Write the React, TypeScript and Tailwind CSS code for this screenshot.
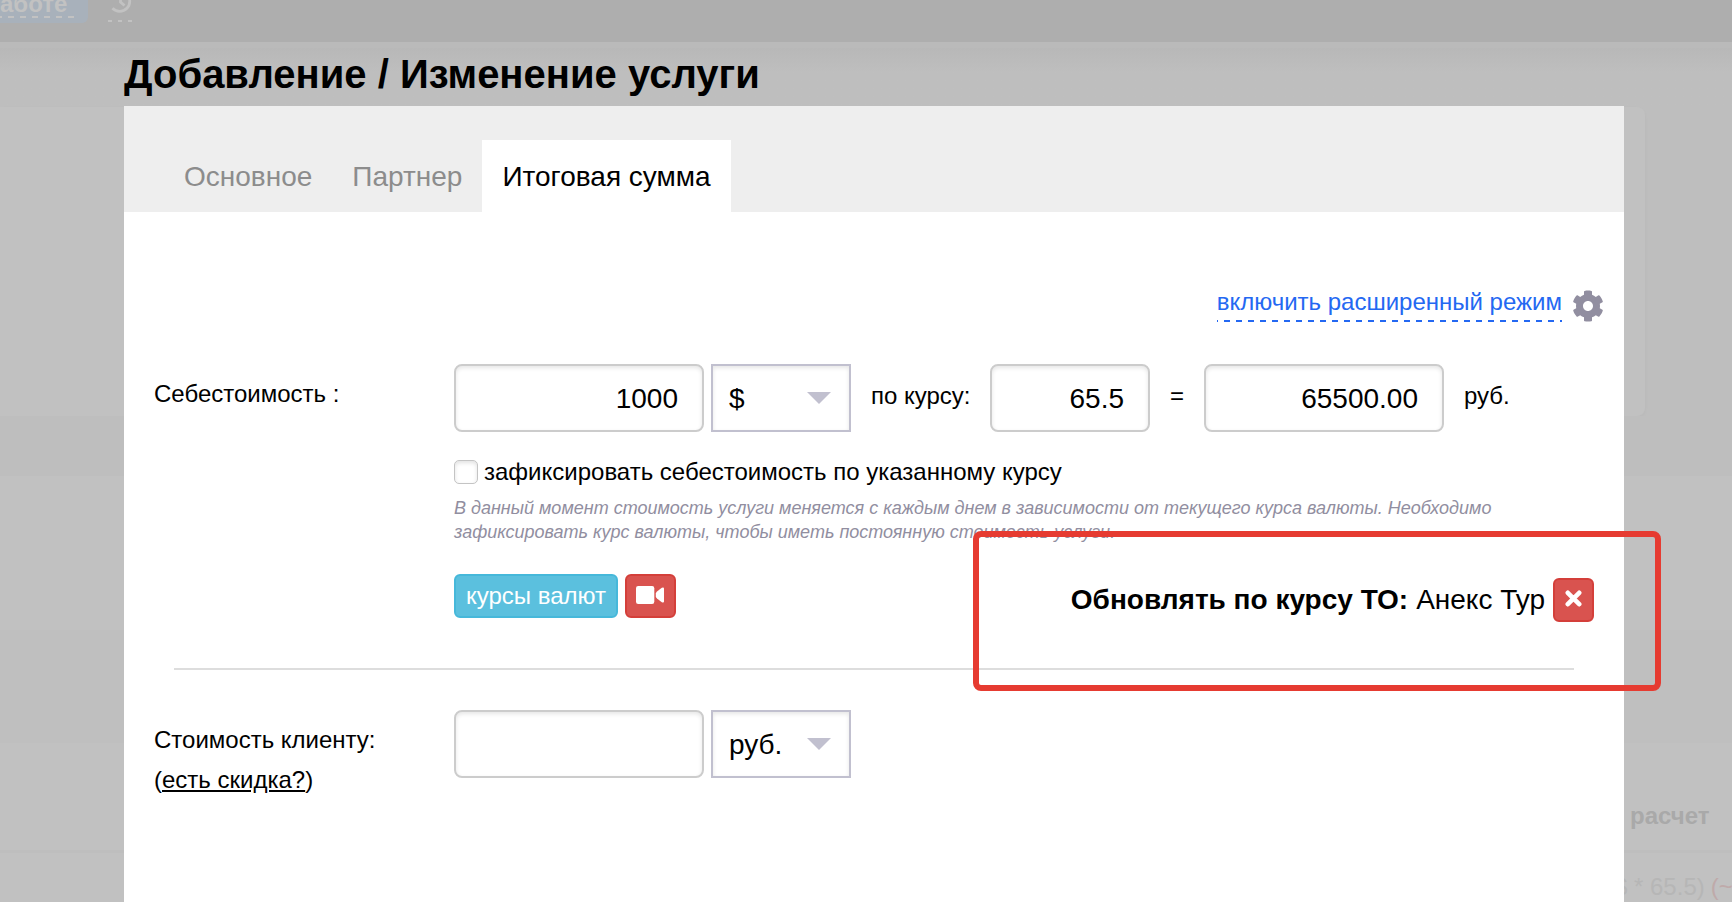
import clsx from "clsx"
import { FaCog } from "react-icons/fa"

const tabs = [
    { id: 1, text: "Основное", active: false },
    { id: 2, text: "Партнер", active: false },
    { id: 3, text: "Итоговая сумма", active: true },
]

function Field({ value, className }: { value: string; className: string }) {
    return (
        <input
            type="text"
            defaultValue={value}
            className={clsx("h-[68px] shrink-0 rounded-lg border-2 border-[#ccc] bg-white px-6 pt-0.5 text-right text-[28px] text-black shadow-[inset_0_2px_4px_rgba(0,0,0,0.1)] outline-none", className)}
        />
    )
}

function Select({ value }: { value: string }) {
    return (
        <button type="button" className="ml-[7px] flex h-[68px] w-[140px] shrink-0 items-center justify-between border-2 border-[#c1c0cf] bg-white pl-4 pr-[18px] text-[28px] shadow-[inset_0_2px_4px_rgba(0,0,0,0.1)]">
            <span className="pt-0.5">{value}</span>
            <svg className="h-3 w-6 fill-[#c1c0cf]" viewBox="0 0 24 12" aria-hidden="true">
                <path d="M0 0h24L12 12z" />
            </svg>
        </button>
    )
}

// dimmed page behind the dialog
function Backdrop() {
    return (
        <div className="flex h-full flex-col bg-[#c1c1c1]" aria-hidden="true">
            <div className="flex h-[42px] shrink-0 items-start bg-[#aeaeae]">
                <div className="flex h-[23px] w-[88px] items-end rounded-br-md bg-[#a8b1bb] pb-[5px]">
                    <span className="w-[75px] bg-[linear-gradient(90deg,#c2c2c2_6px,transparent_6px)] bg-[length:12px_2px] bg-[position:8px_100%] bg-repeat-x pb-[3px] text-[24px] font-bold leading-[22px] text-[#c2c2c2]">аботе</span>
                </div>
                <div className="ml-5 flex h-[22px] w-6 items-end justify-end bg-[linear-gradient(90deg,#c2c2c2_4px,transparent_4px)] bg-[length:10px_2px] bg-[position:0_100%] bg-repeat-x pb-[9px]">
                    <svg className="h-6 w-6 shrink-0" viewBox="0 0 24 24" fill="none" stroke="#c2c2c2" strokeWidth="2.8">
                        <path d="M4.5 19.3A10 10 0 1 0 4 6" />
                        <path d="M12.5 5.5V13l4 3.5" />
                    </svg>
                </div>
            </div>
            <div className="h-1.5 shrink-0 bg-[#bababa]" />
            <div className="h-[59px] shrink-0 bg-linear-to-b from-[#b8b8b8] to-[#bebebe] to-40%" />
            <div className="flex h-[309px] shrink-0 bg-[#bebebe]">
                <div className="w-[1645px] rounded-r-lg bg-[#c1c1c1] shadow-[0_2px_4px_rgba(0,0,0,0.03)]" />
            </div>
            <div className="h-[60px] shrink-0 bg-[#bebebe]" />
            <div className="h-[154px] shrink-0 bg-[#c1c1c1]" />
            <div className="h-[113px] shrink-0 bg-[#bfbfbf]" />
            <div className="flex h-[110px] shrink-0 items-end border-b-3 border-[#bebebe] pb-5 pl-[1630px]">
                <span className="text-[24px] font-bold leading-7 text-[#a9a9a9]">расчет</span>
            </div>
            <div className="flex h-[49px] shrink-0 items-center gap-1.5 whitespace-nowrap pl-[1614px] pt-[18px] text-[24px] text-[#b6b6b6]">
                <span>$ * 65.5)</span>
                <span className="text-[#bfaaaa]">(~</span>
            </div>
        </div>
    )
}

export default function App() {
    return (
        <div className="relative h-[902px] w-[1732px] overflow-hidden font-['Liberation_Sans',Arial,sans-serif] text-[24px] text-black">
            <Backdrop />
            <div className="absolute inset-0 pl-[124px]">
                <div className="flex h-full w-[1500px] flex-col">
                    <h1 className="h-[106px] shrink-0 pt-[51px] text-[40px] font-bold leading-[46px]">Добавление / Изменение услуги</h1>
                    <div className="flex h-[106px] shrink-0 items-end bg-[#eee] pl-10">
                        {
                            tabs.map(tab => (
                                <a key={tab.id} className={clsx("flex h-[72px] items-center px-5 pt-0.5 text-[28px]", tab.active ? "bg-white" : "text-[#8c8c8c]")}>
                                    {tab.text}
                                </a>
                            ))
                        }
                    </div>
                    <div className="flex-1 bg-white">
                        <div className="flex h-[152px] items-start justify-end pr-5 pt-[76px]">
                            <a className="mr-[10px] h-[34px] bg-[linear-gradient(90deg,#2468f2_6px,transparent_6px)] bg-[length:12px_2px] bg-[position:7px_100%] bg-repeat-x text-[24px] leading-7 text-[#2468f2]">включить расширенный режим</a>
                            <FaCog className="mt-0.5 h-8 w-8 text-[#918ea0]" />
                        </div>

                        <div className="flex pl-[30px]">
                            <div className="w-[300px] shrink-0 pt-4 leading-7">Себестоимость :</div>
                            <div className="w-[1170px]">
                                <div className="flex items-center whitespace-nowrap">
                                    <Field value="1000" className="w-[250px]" />
                                    <Select value="$" />
                                    <span className="w-[139px] shrink-0 pb-1 pl-5">по курсу:</span>
                                    <Field value="65.5" className="w-[160px]" />
                                    <span className="w-[54px] shrink-0 pb-1 pl-5">=</span>
                                    <Field value="65500.00" className="w-[240px]" />
                                    <span className="pb-1 pl-5">руб.</span>
                                </div>
                                <label className="mt-[26px] flex h-7 items-center gap-1.5">
                                    <span className="h-6 w-6 rounded-[5px] border border-[#c4c4c4] bg-white shadow-[inset_0_2px_4px_rgba(0,0,0,0.12)]" />
                                    зафиксировать себестоимость по указанному курсу
                                </label>
                                <p className="mt-[10px] w-[1060px] text-[18px] italic leading-6 text-[#918ea0]">
                                    В данный момент стоимость услуги меняется с каждым днем в зависимости от текущего курса валюты. Необходимо зафиксировать курс валюты, чтобы иметь постоянную стоимость услуги.
                                </p>
                                <div className="mt-[30px] flex items-start">
                                    <button type="button" className="h-11 w-[164px] rounded-md border-2 border-[#46b8da] bg-[#5bc0de] text-white">курсы валют</button>
                                    <button type="button" aria-label="видео" className="ml-[7px] flex h-11 w-[51px] items-center justify-center rounded-md border-2 border-[#d43f3a] bg-[#d9534f] pr-0.5">
                                        <svg className="mb-0.5 h-[18px] w-7 fill-white" viewBox="0 0 28 18" aria-hidden="true">
                                            <rect width="18.3" height="18" rx="2.2" />
                                            <path d="M19.8 7.4Q20 6.4 21 5.4L25.8 1.8Q28 .8 28 2.6v12.8q0 1.8-2.2.8L21 12.6q-1-1-1.2-2z" />
                                        </svg>
                                    </button>
                                    <div className="ml-auto mr-[30px] mt-1 flex items-center whitespace-nowrap text-[28px]">
                                        <b className="mr-2">Обновлять по курсу ТО:</b>
                                        Анекс Тур
                                        <button type="button" aria-label="удалить" className="ml-2 flex h-11 w-[41px] items-center justify-center rounded-md border-2 border-[#d43f3a] bg-[#d9534f]">
                                            <svg className="mb-[3px] h-[17px] w-[17px]" viewBox="0 0 17 17" stroke="#fff" strokeWidth="4.6" strokeLinecap="round" aria-hidden="true">
                                                <path d="m2.8 2.8 11.4 11.4M14.2 2.8 2.8 14.2" />
                                            </svg>
                                        </button>
                                    </div>
                                </div>
                            </div>
                        </div>

                        <hr className="mx-[50px] mt-[46px] border-t-2 border-[#ddd]" />

                        <div className="mt-10 flex pl-[30px]">
                            <div className="w-[300px] shrink-0 pt-[10px] leading-10">
                                Стоимость клиенту:<br />
                                (<a className="underline">есть скидка?</a>)
                            </div>
                            <Field value="" className="w-[250px]" />
                            <Select value="руб." />
                        </div>
                    </div>
                </div>
            </div>
            {/* highlight frame over the tour operator rate */}
            <div className="absolute left-[973px] top-[531px] h-[160px] w-[688px] rounded-lg border-[6px] border-[#e63b31]" />
        </div>
    )
}
